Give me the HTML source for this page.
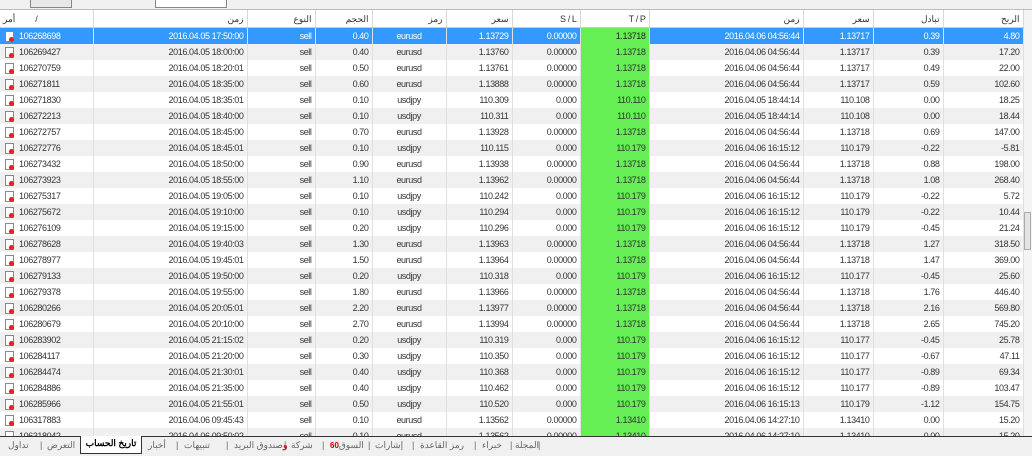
<!DOCTYPE html>
<html><head><meta charset="utf-8"><style>
body{margin:0;width:1032px;height:455px;overflow:hidden;background:#f0f0f0;font-family:"Liberation Sans","Noto Sans CJK SC",sans-serif;font-size:9px;letter-spacing:-0.4px;color:#333;position:relative}
#tb{position:absolute;left:0;top:0;width:1032px;height:9px;background:#f0f0f0;border-bottom:1px solid #bbb;overflow:hidden}
#tb span{position:absolute;top:-6px;height:12px;border:1px solid #888;background:#e8e8e8}
#hdr{position:absolute;left:0;top:10px;width:1024px;height:17px;background:#fff;border-bottom:1px solid #ccc}
#wrap{position:absolute;left:0;top:28px;width:1024px;height:408px;overflow:hidden;background:#fff}
table{border-collapse:collapse;table-layout:fixed}
td{height:16px;padding:0 3px;text-align:right;border-right:1px solid #e0e0e0;white-space:nowrap;overflow:hidden;line-height:16px;box-sizing:border-box}
#hdr td{height:17px;color:#333;font-size:9px;border-right:1px solid #d8d8d8}
tr.g td{background:#f0f0f0}
tr td.tp{background:#66ee55;text-align:right}
tr.s td{background:#3399ff;color:#fff}
tr.s td.tp{background:#66ee55;color:#222}
td.o{text-align:left;padding-left:19px;position:relative}
td.sym{text-align:center}
.ic{position:absolute;left:5px;top:3px;width:7px;height:9px;background:#fff;border:1px solid #888}
.ic:after{content:"";position:absolute;left:3px;top:5px;width:5px;height:5px;border-radius:50%;background:#d22}
#sb{position:absolute;left:1024px;top:10px;width:8px;height:426px;background:#f4f4f4}
#th{position:absolute;left:1024px;top:212px;width:7px;height:38px;background:#e4e4e4;border:1px solid #aaa;box-sizing:border-box}
#tabs{position:absolute;left:0;top:436px;width:1032px;height:19px;background:#f0f0f0;border-top:1px solid #333;font-size:9px;color:#666;letter-spacing:0}
#tabs span{position:absolute;top:3px}
#act{position:absolute;left:80px;top:-1px;width:60px;height:17px;background:#fff;border:1px solid #333;border-top:none;text-align:center;color:#000;font-weight:bold;line-height:15px}
</style></head><body>
<div id="tb"><span style="left:30px;width:40px"></span><span style="left:155px;width:70px;background:#fff"></span></div>
<div id="hdr"><table><colgroup><col width="93"><col width="154"><col width="68"><col width="57"><col width="74"><col width="66"><col width="68"><col width="69"><col width="154"><col width="70"><col width="70"><col width="80"></colgroup>
<tr><td style="text-align:left">أمر &nbsp;&nbsp;&nbsp;&nbsp;&nbsp;&nbsp;&nbsp;/</td><td>زمن</td><td>النوع</td><td>الحجم</td><td>رمز</td><td>سعر</td><td>S / L</td><td>T / P</td><td>زمن</td><td>سعر</td><td>تبادل</td><td>الربح</td></tr></table></div>
<div id="wrap"><table><colgroup><col width="93"><col width="154"><col width="68"><col width="57"><col width="74"><col width="66"><col width="68"><col width="69"><col width="154"><col width="70"><col width="70"><col width="80"></colgroup>
<tr class="s"><td class="o"><i class="ic"></i>106268698</td><td>2016.04.05 17:50:00</td><td>sell</td><td>0.40</td><td class="sym">eurusd</td><td>1.13729</td><td>0.00000</td><td class="tp">1.13718</td><td>2016.04.06 04:56:44</td><td>1.13717</td><td>0.39</td><td>4.80</td></tr>
<tr class="g"><td class="o"><i class="ic"></i>106269427</td><td>2016.04.05 18:00:00</td><td>sell</td><td>0.40</td><td class="sym">eurusd</td><td>1.13760</td><td>0.00000</td><td class="tp">1.13718</td><td>2016.04.06 04:56:44</td><td>1.13717</td><td>0.39</td><td>17.20</td></tr>
<tr><td class="o"><i class="ic"></i>106270759</td><td>2016.04.05 18:20:01</td><td>sell</td><td>0.50</td><td class="sym">eurusd</td><td>1.13761</td><td>0.00000</td><td class="tp">1.13718</td><td>2016.04.06 04:56:44</td><td>1.13717</td><td>0.49</td><td>22.00</td></tr>
<tr class="g"><td class="o"><i class="ic"></i>106271811</td><td>2016.04.05 18:35:00</td><td>sell</td><td>0.60</td><td class="sym">eurusd</td><td>1.13888</td><td>0.00000</td><td class="tp">1.13718</td><td>2016.04.06 04:56:44</td><td>1.13717</td><td>0.59</td><td>102.60</td></tr>
<tr><td class="o"><i class="ic"></i>106271830</td><td>2016.04.05 18:35:01</td><td>sell</td><td>0.10</td><td class="sym">usdjpy</td><td>110.309</td><td>0.000</td><td class="tp">110.110</td><td>2016.04.05 18:44:14</td><td>110.108</td><td>0.00</td><td>18.25</td></tr>
<tr class="g"><td class="o"><i class="ic"></i>106272213</td><td>2016.04.05 18:40:00</td><td>sell</td><td>0.10</td><td class="sym">usdjpy</td><td>110.311</td><td>0.000</td><td class="tp">110.110</td><td>2016.04.05 18:44:14</td><td>110.108</td><td>0.00</td><td>18.44</td></tr>
<tr><td class="o"><i class="ic"></i>106272757</td><td>2016.04.05 18:45:00</td><td>sell</td><td>0.70</td><td class="sym">eurusd</td><td>1.13928</td><td>0.00000</td><td class="tp">1.13718</td><td>2016.04.06 04:56:44</td><td>1.13718</td><td>0.69</td><td>147.00</td></tr>
<tr class="g"><td class="o"><i class="ic"></i>106272776</td><td>2016.04.05 18:45:01</td><td>sell</td><td>0.10</td><td class="sym">usdjpy</td><td>110.115</td><td>0.000</td><td class="tp">110.179</td><td>2016.04.06 16:15:12</td><td>110.179</td><td>-0.22</td><td>-5.81</td></tr>
<tr><td class="o"><i class="ic"></i>106273432</td><td>2016.04.05 18:50:00</td><td>sell</td><td>0.90</td><td class="sym">eurusd</td><td>1.13938</td><td>0.00000</td><td class="tp">1.13718</td><td>2016.04.06 04:56:44</td><td>1.13718</td><td>0.88</td><td>198.00</td></tr>
<tr class="g"><td class="o"><i class="ic"></i>106273923</td><td>2016.04.05 18:55:00</td><td>sell</td><td>1.10</td><td class="sym">eurusd</td><td>1.13962</td><td>0.00000</td><td class="tp">1.13718</td><td>2016.04.06 04:56:44</td><td>1.13718</td><td>1.08</td><td>268.40</td></tr>
<tr><td class="o"><i class="ic"></i>106275317</td><td>2016.04.05 19:05:00</td><td>sell</td><td>0.10</td><td class="sym">usdjpy</td><td>110.242</td><td>0.000</td><td class="tp">110.179</td><td>2016.04.06 16:15:12</td><td>110.179</td><td>-0.22</td><td>5.72</td></tr>
<tr class="g"><td class="o"><i class="ic"></i>106275672</td><td>2016.04.05 19:10:00</td><td>sell</td><td>0.10</td><td class="sym">usdjpy</td><td>110.294</td><td>0.000</td><td class="tp">110.179</td><td>2016.04.06 16:15:12</td><td>110.179</td><td>-0.22</td><td>10.44</td></tr>
<tr><td class="o"><i class="ic"></i>106276109</td><td>2016.04.05 19:15:00</td><td>sell</td><td>0.20</td><td class="sym">usdjpy</td><td>110.296</td><td>0.000</td><td class="tp">110.179</td><td>2016.04.06 16:15:12</td><td>110.179</td><td>-0.45</td><td>21.24</td></tr>
<tr class="g"><td class="o"><i class="ic"></i>106278628</td><td>2016.04.05 19:40:03</td><td>sell</td><td>1.30</td><td class="sym">eurusd</td><td>1.13963</td><td>0.00000</td><td class="tp">1.13718</td><td>2016.04.06 04:56:44</td><td>1.13718</td><td>1.27</td><td>318.50</td></tr>
<tr><td class="o"><i class="ic"></i>106278977</td><td>2016.04.05 19:45:01</td><td>sell</td><td>1.50</td><td class="sym">eurusd</td><td>1.13964</td><td>0.00000</td><td class="tp">1.13718</td><td>2016.04.06 04:56:44</td><td>1.13718</td><td>1.47</td><td>369.00</td></tr>
<tr class="g"><td class="o"><i class="ic"></i>106279133</td><td>2016.04.05 19:50:00</td><td>sell</td><td>0.20</td><td class="sym">usdjpy</td><td>110.318</td><td>0.000</td><td class="tp">110.179</td><td>2016.04.06 16:15:12</td><td>110.177</td><td>-0.45</td><td>25.60</td></tr>
<tr><td class="o"><i class="ic"></i>106279378</td><td>2016.04.05 19:55:00</td><td>sell</td><td>1.80</td><td class="sym">eurusd</td><td>1.13966</td><td>0.00000</td><td class="tp">1.13718</td><td>2016.04.06 04:56:44</td><td>1.13718</td><td>1.76</td><td>446.40</td></tr>
<tr class="g"><td class="o"><i class="ic"></i>106280266</td><td>2016.04.05 20:05:01</td><td>sell</td><td>2.20</td><td class="sym">eurusd</td><td>1.13977</td><td>0.00000</td><td class="tp">1.13718</td><td>2016.04.06 04:56:44</td><td>1.13718</td><td>2.16</td><td>569.80</td></tr>
<tr><td class="o"><i class="ic"></i>106280679</td><td>2016.04.05 20:10:00</td><td>sell</td><td>2.70</td><td class="sym">eurusd</td><td>1.13994</td><td>0.00000</td><td class="tp">1.13718</td><td>2016.04.06 04:56:44</td><td>1.13718</td><td>2.65</td><td>745.20</td></tr>
<tr class="g"><td class="o"><i class="ic"></i>106283902</td><td>2016.04.05 21:15:02</td><td>sell</td><td>0.20</td><td class="sym">usdjpy</td><td>110.319</td><td>0.000</td><td class="tp">110.179</td><td>2016.04.06 16:15:12</td><td>110.177</td><td>-0.45</td><td>25.78</td></tr>
<tr><td class="o"><i class="ic"></i>106284117</td><td>2016.04.05 21:20:00</td><td>sell</td><td>0.30</td><td class="sym">usdjpy</td><td>110.350</td><td>0.000</td><td class="tp">110.179</td><td>2016.04.06 16:15:12</td><td>110.177</td><td>-0.67</td><td>47.11</td></tr>
<tr class="g"><td class="o"><i class="ic"></i>106284474</td><td>2016.04.05 21:30:01</td><td>sell</td><td>0.40</td><td class="sym">usdjpy</td><td>110.368</td><td>0.000</td><td class="tp">110.179</td><td>2016.04.06 16:15:12</td><td>110.177</td><td>-0.89</td><td>69.34</td></tr>
<tr><td class="o"><i class="ic"></i>106284886</td><td>2016.04.05 21:35:00</td><td>sell</td><td>0.40</td><td class="sym">usdjpy</td><td>110.462</td><td>0.000</td><td class="tp">110.179</td><td>2016.04.06 16:15:12</td><td>110.177</td><td>-0.89</td><td>103.47</td></tr>
<tr class="g"><td class="o"><i class="ic"></i>106285966</td><td>2016.04.05 21:55:01</td><td>sell</td><td>0.50</td><td class="sym">usdjpy</td><td>110.520</td><td>0.000</td><td class="tp">110.179</td><td>2016.04.06 16:15:13</td><td>110.179</td><td>-1.12</td><td>154.75</td></tr>
<tr><td class="o"><i class="ic"></i>106317883</td><td>2016.04.06 09:45:43</td><td>sell</td><td>0.10</td><td class="sym">eurusd</td><td>1.13562</td><td>0.00000</td><td class="tp">1.13410</td><td>2016.04.06 14:27:10</td><td>1.13410</td><td>0.00</td><td>15.20</td></tr>
<tr class="g"><td class="o"><i class="ic"></i>106318042</td><td>2016.04.06 09:50:02</td><td>sell</td><td>0.10</td><td class="sym">eurusd</td><td>1.13562</td><td>0.00000</td><td class="tp">1.13410</td><td>2016.04.06 14:27:10</td><td>1.13410</td><td>0.00</td><td>15.20</td></tr>
<tr><td class="o"><i class="ic"></i>106318255</td><td>2016.04.06 09:55:01</td><td>sell</td><td>0.10</td><td class="sym">eurusd</td><td>1.13564</td><td>0.00000</td><td class="tp">1.13410</td><td>2016.04.06 14:27:10</td><td>1.13410</td><td>0.00</td><td>15.40</td></tr>
</table></div>
<div id="sb"></div><div id="th"></div>
<div id="tabs">
<span style="left:8px">تداول</span><span style="left:40px">|</span><span style="left:47px">التعرض</span>
<div id="act">تاريخ الحساب</div>
<span style="left:148px">أخبار</span><span style="left:176px">|</span><span style="left:184px">تنبيهات</span><span style="left:226px">|</span><span style="left:234px"><b style="color:#c00">و</b>صندوق البريد</span><span style="left:284px">|</span><span style="left:291px">شركة</span><span style="left:322px">|</span><span style="left:330px"><b style="color:#c00;font-size:8px">60</b>السوق</span><span style="left:368px">|</span><span style="left:375px">إشارات</span><span style="left:412px">|</span><span style="left:420px">رمز القاعدة</span><span style="left:474px">|</span><span style="left:482px">خبراء</span><span style="left:510px">|</span><span style="left:515px">المجلة</span><span style="left:538px">|</span>
</div>
</body></html>
